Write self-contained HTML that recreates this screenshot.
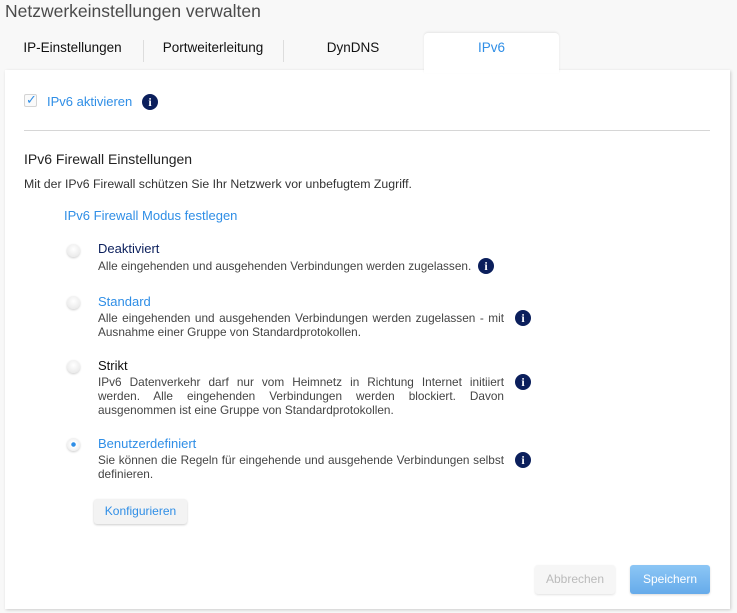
<!DOCTYPE html>
<html><head><meta charset="utf-8"><style>
*{margin:0;padding:0;box-sizing:border-box}
body{width:737px;height:613px;background:#f8f8f8;font-family:"Liberation Sans",sans-serif;font-size:12px;color:#333;position:relative;overflow:hidden}
.a{position:absolute;white-space:nowrap}
h1{position:absolute;left:5px;top:1px;font-size:17.5px;font-weight:normal;color:#4a4a4a}
.tab{position:absolute;top:40px;font-size:13.5px;color:#111;text-align:center}
.sep{position:absolute;top:40px;width:1px;height:22px;background:#ddd}
.panel{position:absolute;left:5px;top:70px;width:725px;height:539px;background:#fff;box-shadow:1px 1px 3px rgba(0,0,0,.18)}
.act{position:absolute;left:424px;top:33px;width:135px;height:40px;background:#fff;border-radius:4px 4px 0 0;box-shadow:0 -1px 2px rgba(0,0,0,.08)}
.i{position:absolute;width:16px;height:16px;border-radius:50%;background:#0b1f5c;color:#fff;font-weight:bold;font-size:12px;text-align:center;line-height:16px;font-family:"Liberation Serif",serif}
.r{position:absolute;left:67px;width:13px;height:13px;border-radius:50%;background:radial-gradient(circle at 50% 40%,#fff,#e4e4e4);box-shadow:0 1px 2px rgba(0,0,0,.2)}
.t{position:absolute;left:98px;font-size:13px}
.d{position:absolute;left:98px;width:406px;font-size:11.8px;line-height:14px;color:#444;text-align:justify}
.blue{color:#2f8ee6}
.btn{position:absolute;border-radius:3px;font-size:12px;text-align:center}
</style></head><body>
<h1>Netzwerkeinstellungen verwalten</h1>
<div class="panel"></div>
<div class="act"></div>
<div class="tab" style="left:10px;width:125px">IP-Einstellungen</div>
<div class="sep" style="left:143px"></div>
<div class="tab" style="left:143px;width:140px">Portweiterleitung</div>
<div class="sep" style="left:283px"></div>
<div class="tab" style="left:283px;width:140px">DynDNS</div>
<div class="tab blue" style="left:424px;width:135px">IPv6</div>
<div class="a" style="left:24px;top:94px;width:13px;height:13px;border:1px solid #d4d4d4;border-radius:2px;background:#fafafa"></div>
<div class="a blue" style="left:26px;top:92px;font-size:13px">✓</div>
<div class="a blue" style="left:47px;top:94px;font-size:13px">IPv6 aktivieren</div>
<div class="i" style="left:142px;top:94px">i</div>
<div class="a" style="left:24px;top:130px;width:686px;height:1px;background:#d6d6d6"></div>
<div class="a" style="left:24px;top:151px;font-size:14px;color:#222">IPv6 Firewall Einstellungen</div>
<div class="a" style="left:24px;top:177px;font-size:12.3px">Mit der IPv6 Firewall schützen Sie Ihr Netzwerk vor unbefugtem Zugriff.</div>
<div class="a blue" style="left:64px;top:208px;font-size:13px">IPv6 Firewall Modus festlegen</div>

<div class="r" style="top:244px"></div>
<div class="t" style="top:241px;color:#0b1f5c">Deaktiviert</div>
<div class="d" style="top:259px">Alle eingehenden und ausgehenden Verbindungen werden zugelassen.</div>
<div class="i" style="left:478px;top:258px">i</div>

<div class="r" style="top:296px"></div>
<div class="t blue" style="top:294px">Standard</div>
<div class="d" style="top:311px">Alle eingehenden und ausgehenden Verbindungen werden zugelassen - mit Ausnahme einer Gruppe von Standardprotokollen.</div>
<div class="i" style="left:515px;top:310px">i</div>

<div class="r" style="top:360px"></div>
<div class="t" style="top:358px;color:#111">Strikt</div>
<div class="d" style="top:375px">IPv6 Datenverkehr darf nur vom Heimnetz in Richtung Internet initiiert werden. Alle eingehenden Verbindungen werden blockiert. Davon ausgenommen ist eine Gruppe von Standardprotokollen.</div>
<div class="i" style="left:515px;top:374px">i</div>

<div class="r" style="top:438px;background:radial-gradient(circle,#2f8ee6 0 2px,#fff 2.5px,#e4e4e4)"></div>
<div class="t blue" style="top:436px">Benutzerdefiniert</div>
<div class="d" style="top:453px">Sie können die Regeln für eingehende und ausgehende Verbindungen selbst definieren.</div>
<div class="i" style="left:515px;top:452px">i</div>

<div class="btn blue" style="left:94px;top:499px;width:93px;height:25px;line-height:25px;background:#f3f3f3;box-shadow:0 1px 2px rgba(0,0,0,.2)">Konfigurieren</div>
<div class="btn" style="left:535px;top:565px;width:80px;height:29px;line-height:29px;color:#bbb;background:#f6f6f6;box-shadow:0 1px 2px rgba(0,0,0,.12)">Abbrechen</div>
<div class="btn" style="left:630px;top:565px;width:80px;height:29px;line-height:29px;color:#fff;background:linear-gradient(#8cc6f5,#66abea);box-shadow:0 1px 2px rgba(0,0,0,.15)">Speichern</div>
</body></html>
